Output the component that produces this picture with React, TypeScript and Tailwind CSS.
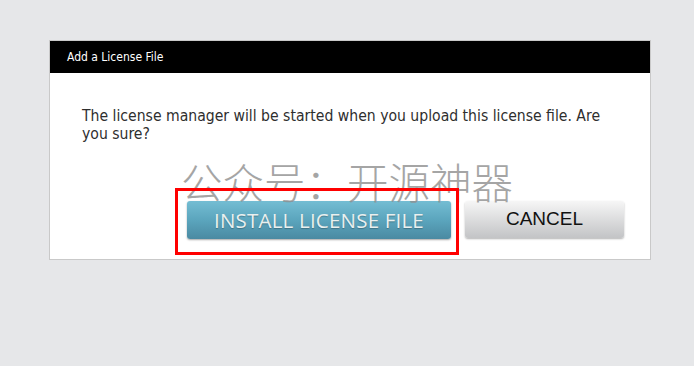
import React from "react";

export default function App() {
  return (
    <div className="w-[694px] h-[366px] bg-[#e6e7e9] pt-[40px] pl-[49px] overflow-hidden">
      <div className="relative w-[602px] h-[220px] bg-white border border-[#c9c9c9] flex flex-col">
        <div className="h-[32px] bg-black flex items-center pl-[17px]">
          <span
            className="text-white text-[12px] leading-none"
            style={{ fontFamily: '"DejaVu Sans", Verdana, sans-serif', fontStretch: "condensed" }}
          >
            Add a License File
          </span>
        </div>
        <div className="flex-1 flex flex-col pl-[32px] pr-[26px] pt-[34px]">
          <p
            className="text-[15.6px] leading-[18px] text-[#2e2e2e] pr-[8px]"
            style={{ fontFamily: '"DejaVu Sans", Verdana, sans-serif', fontStretch: "condensed" }}
          >
            The license manager will be started when you upload this license file. Are you sure?
          </p>
          <div className="flex justify-end gap-[14px] mt-[58px]">
            <button
              className="w-[264px] h-[38px] rounded-[3px] bg-gradient-to-b from-[#74bdd3] via-[#5ba5bd] to-[#4a8aa2] shadow-[0_1px_2px_rgba(0,0,0,0.35)] text-[#e9f0ef] text-[20.5px] tracking-[0.2px] flex items-center justify-center"
              style={{ fontFamily: '"Open Sans", sans-serif', textShadow: "0 1px 1px rgba(0,0,0,0.25)" }}
            >
              INSTALL LICENSE FILE
            </button>
            <button
              className="w-[159px] h-[37px] rounded-[3px] bg-gradient-to-b from-[#f6f6f6] to-[#c3c4c6] shadow-[0_1px_2px_rgba(0,0,0,0.3)] text-[#111] text-[19px] flex items-center justify-center"
              style={{ fontFamily: '"Liberation Sans", Arial, sans-serif' }}
            >
              CANCEL
            </button>
          </div>
        </div>
        <div
          className="absolute left-[131px] top-[120px] text-[41.5px] leading-none text-[#8f8f8f] opacity-80 whitespace-nowrap pointer-events-none"
          style={{ fontFamily: '"Noto Sans CJK SC", sans-serif', fontWeight: 300 }}
        >
          公众号：开源神器
        </div>
        <div className="absolute left-[125px] top-[147px] w-[284px] h-[67px] border-[3px] border-[#ff0000] pointer-events-none" />
      </div>
    </div>
  );
}
